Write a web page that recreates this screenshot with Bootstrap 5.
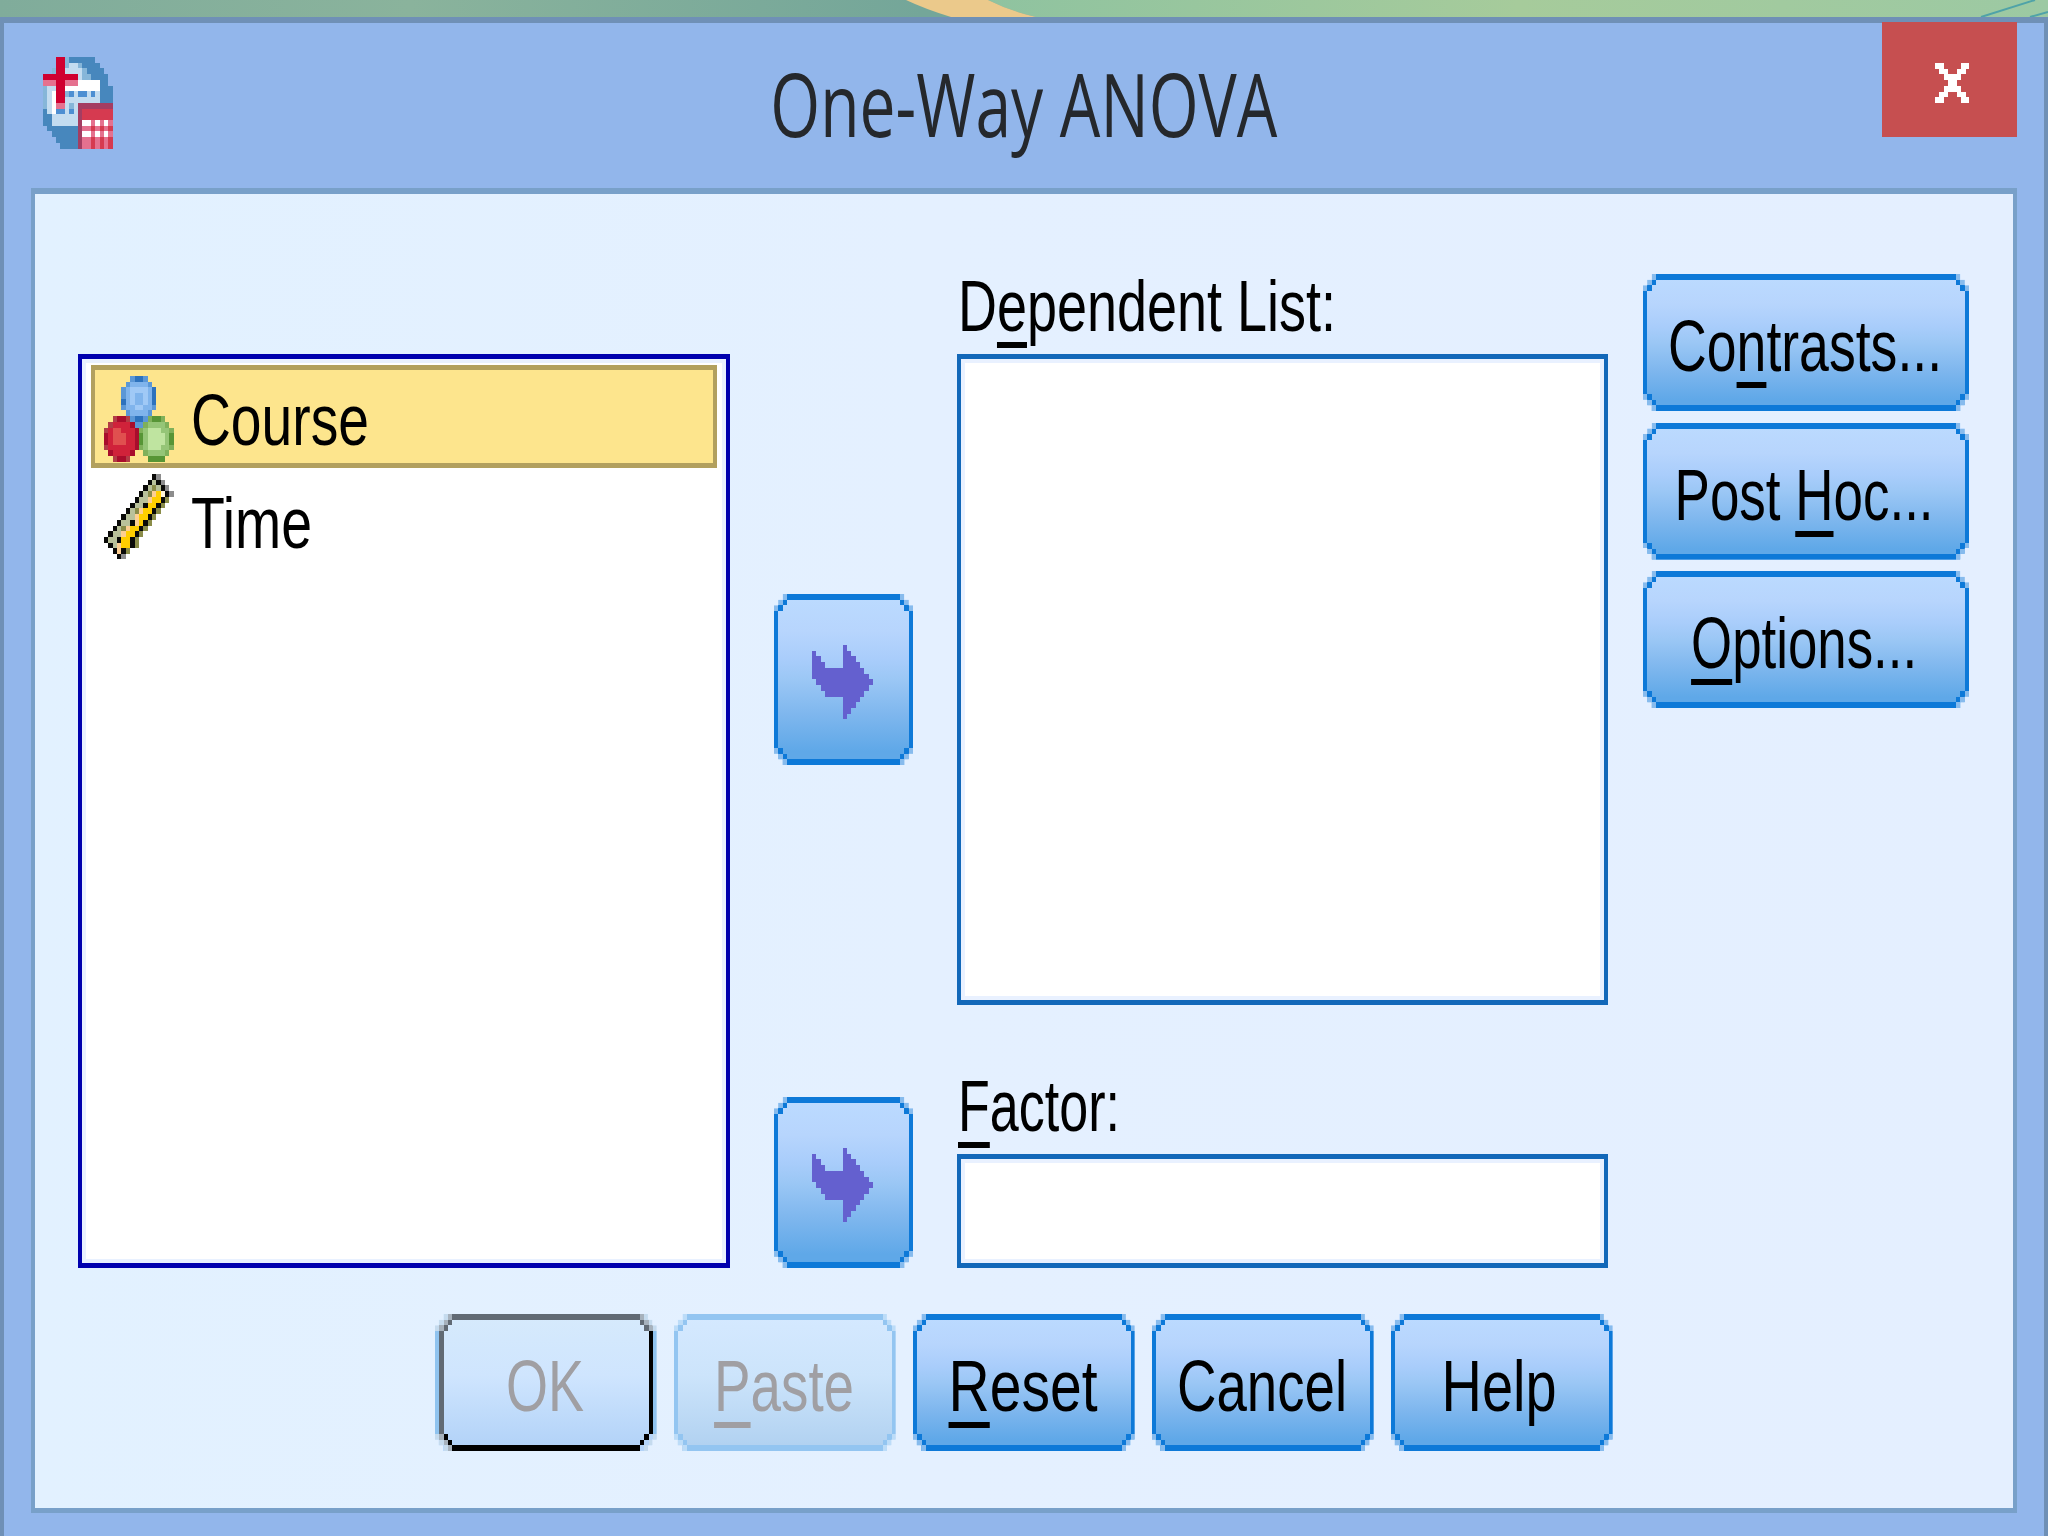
<!DOCTYPE html>
<html lang="en">
<head>
  <meta charset="UTF-8" />
  <meta name="viewport" content="width=device-width, initial-scale=1.0"/>
  <title>One-Way ANOVA</title>
  <link href="https://cdn.jsdelivr.net/npm/bootstrap@5.3.3/dist/css/bootstrap.min.css" rel="stylesheet"/>
  <style>
    body {
      height: 1536px;
      font-family: "Liberation Sans", Arial, sans-serif;
      font-size: 72px;
      line-height: 1;
      color: #000;
      background: #92b6eb;
    }
    .backdrop { height: 17px; flex: none; }
    .backdrop svg { width: 2048px; height: 17px; }

    .dialog-frame { border: solid #6f90b6; border-width: 6px 4px 0; background: #92b6eb; }
    .title-bar {
      display: grid;
      grid-template-columns: 1fr auto 1fr;
      height: 165px;
      flex: none;
    }
    .title-icon { margin: 34px 0 0 39px; }
    .title-text { font-family: "Open Sans", sans-serif; font-size: 88px; line-height: 160px; color: #25282c; }
    .close-btn {
      width: 135px;
      height: 115px;
      margin: -1px 27px 0 0;
      padding: 8px 0 0 5px;
      background: #c64f50;
      border: 0;
      border-radius: 0;
    }

    .dialog-panel {
      margin: 0 27px 23px;
      padding: 80px 43px 0;
      border: solid #78a0c9;
      border-width: 6px 4px 5px;
      background: linear-gradient(90deg, #e2f1ff, #e4f0ff 45%, #e4efff);
    }
    .main-row { height: 994px; }

    .box {
      background: #fff;
      border: solid #1268b9;
      border-width: 5.5px 4.4px;
      box-shadow: inset 0 0 0 4px #e9f1ff;
    }
    .source-box { width: 652px; height: 914px; border-color: #0000ae; padding: 5.5px 9px; }
    .fields { width: 651px; margin-right: 35px; }
    .target-box { height: 651px; }
    .factor-box { height: 114px; }
    .field-label { height: 80px; line-height: 64px; padding-left: 1px; }

    .source-item {
      height: 103px;
      padding: 0 0 0 9px;
      border: solid transparent;
      border-width: 5.5px 4.4px;
      border-radius: 0;
      background: transparent;
      color: #000;
    }
    .source-item.chosen { background: #fde58d; border-color: #b2a05e; }
    .source-item .words { padding-top: 7px; margin-left: 17px; }
    .icon-nominal { margin-top: 6px; }
    .icon-scale { margin-top: -5px; }

    .mover-col { width: 139px; margin: 0 44px; padding-top: 320px; }
    .side-col { width: 326px; gap: 11.5px; }

    /* stepped corners: three cells of 4.4 x 5.7 on each side */
    .cmd {
      position: relative;
      display: flex;
      align-items: center;
      justify-content: center;
      height: 137px;
      padding: 7px 1px 0 0;
      border: 0;
      border-radius: 0;
      font-size: 72px;
      line-height: 1;
      color: #000;
      background: linear-gradient(#bcdbff, #b7d5fd 22%, #a9cdfb 38%, #9bc7f5 50%, #7fb7ee 70%, #5fa8e8 92%);
      border: 0 solid transparent;
      border-image: url("data:image/svg+xml,%3Csvg xmlns='http://www.w3.org/2000/svg' width='70' height='70' viewBox='0 0 7 7' shape-rendering='crispEdges'%3E%3Cpath fill='%2387bbed' d='M2 0h3v1h1v1h1v3h-1v1h-1v1h-3v-1h-1v-1h-1v-3h1v-1h1zM3 1v1h-1v1h-1v1h1v1h1v1h1v-1h1v-1h1v-1h-1v-1h-1v-1z' fill-rule='evenodd'/%3E%3Cpath fill='%230d79d8' d='M3 0h1v1h-1zM3 6h1v1h-1zM0 3h1v1h-1zM6 3h1v1h-1zM2 1h1v1h-1zM1 2h1v1h-1zM4 1h1v1h-1zM5 2h1v1h-1zM2 5h1v1h-1zM1 4h1v1h-1zM4 5h1v1h-1zM5 4h1v1h-1z'/%3E%3C/svg%3E") 30 / 17.2px 13px stretch;
      clip-path: polygon(8.7px 0, calc(100% - 8.7px) 0, calc(100% - 8.7px) 5.7px, calc(100% - 4.3px) 5.7px, calc(100% - 4.3px) 11.4px, 100% 11.4px, 100% calc(100% - 11.4px), calc(100% - 4.3px) calc(100% - 11.4px), calc(100% - 4.3px) calc(100% - 5.7px), calc(100% - 8.7px) calc(100% - 5.7px), calc(100% - 8.7px) 100%, 8.7px 100%, 8.7px calc(100% - 5.7px), 4.3px calc(100% - 5.7px), 4.3px calc(100% - 11.4px), 0 calc(100% - 11.4px), 0 11.4px, 4.3px 11.4px, 4.3px 5.7px, 8.7px 5.7px);
    }
    .cmd-mover { height: 171px; padding-top: 6px; }
    .cmd-wide { padding-right: 3px; }
    .cmd:disabled { color: #a09fa3; background: linear-gradient(#d5e9ff, #cce4fb 45%, #b2d2f1 95%); opacity: 1; }
    .cmd-paste {
      border-image-source: url("data:image/svg+xml,%3Csvg xmlns='http://www.w3.org/2000/svg' width='70' height='70' viewBox='0 0 7 7' shape-rendering='crispEdges'%3E%3Cpath fill='%23bcdcf8' d='M2 0h3v1h1v1h1v3h-1v1h-1v1h-3v-1h-1v-1h-1v-3h1v-1h1zM3 1v1h-1v1h-1v1h1v1h1v1h1v-1h1v-1h1v-1h-1v-1h-1v-1z' fill-rule='evenodd'/%3E%3Cpath fill='%2393c5f1' d='M3 0h1v1h-1zM3 6h1v1h-1zM0 3h1v1h-1zM6 3h1v1h-1zM2 1h1v1h-1zM1 2h1v1h-1zM4 1h1v1h-1zM5 2h1v1h-1zM2 5h1v1h-1zM1 4h1v1h-1zM4 5h1v1h-1zM5 4h1v1h-1z'/%3E%3C/svg%3E");
    }
    .cmd-ok {
      border-image: url("data:image/svg+xml,%3Csvg xmlns='http://www.w3.org/2000/svg' width='90' height='70' viewBox='0 0 9 7' shape-rendering='crispEdges'%3E%3Cpath fill='%23c5dbee' d='M0 2h1v3h-1zM8 2h1v3h-1zM2 0h1v1h-1zM6 0h1v1h-1zM2 6h1v1h-1zM6 6h1v1h-1zM1 1h1v1h-1zM7 1h1v1h-1zM1 5h1v1h-1zM7 5h1v1h-1z'/%3E%3Cpath fill='%238fc3ef' d='M0 3h1v1h-1zM8 3h1v1h-1z'/%3E%3Cpath fill='%23a6b1bc' d='M3 0h1v1h-1zM5 0h1v1h-1zM2 1h1v1h-1zM6 1h1v1h-1zM1 2h1v1h-1zM7 2h1v1h-1zM1 4h1v1h-1zM2 5h1v1h-1zM3 6h1v1h-1z'/%3E%3Cpath fill='%23616a74' d='M4 0h1v1h-1zM3 1h1v1h-1zM5 1h1v1h-1zM2 2h1v1h-1zM6 2h1v1h-1zM1 3h1v1h-1z'/%3E%3Cpath fill='%23000' d='M7 3h1v1h-1zM6 4h1v1h-1zM5 5h1v1h-1zM4 6h1v1h-1zM3 5h1v1h-1zM2 4h1v1h-1z'/%3E%3C/svg%3E") 30 40 / 17.2px 17.4px stretch;
    }
    .cmd-ok:disabled { background: linear-gradient(#d6eafc, #cfe5fe 45%, #b3d3f8 95%); }

    .bottom-row { margin: 46px 0 0 356.5px; gap: 17px; }
    .bottom-row .cmd { width: 222px; }
    .bottom-row .cmd-help { padding-right: 5px; }

    .words { display: inline-block; white-space: pre; flex: none; }
    .key {
      text-decoration: underline;
      text-decoration-thickness: 6px;
      text-underline-offset: 11px;
      text-decoration-skip-ink: none;
    }
    .sprite { display: block; flex: none; }
  </style>
</head>
<body class="d-flex flex-column overflow-hidden m-0">
  <div class="backdrop">
    <svg class="d-block" viewBox="0 0 2048 17">
      <defs>
        <linearGradient id="leaf">
          <stop offset="0" stop-color="#80ac9b"/>
          <stop offset=".2" stop-color="#8ab39c"/>
          <stop offset=".45" stop-color="#74a699"/>
        </linearGradient>
        <linearGradient id="meadow">
          <stop offset="0" stop-color="#8fc3a0"/>
          <stop offset=".5" stop-color="#a6cb9b"/>
          <stop offset="1" stop-color="#9cc9a3"/>
        </linearGradient>
      </defs>
      <rect width="2048" height="17" fill="url(#leaf)"/>
      <path d="M988 0H2048V17H1036Q1010 11 988 0z" fill="url(#meadow)"/>
      <path d="M906 0H988Q1010 11 1036 17H951Q925 9 906 0z" fill="#ebc98b"/>
      <path d="M1981 17L2035 0M2030 17L2048 12" stroke="#4fa3a8" stroke-width="2" fill="none"/>
    </svg>
  </div>

  <div class="dialog-frame d-flex flex-column flex-fill">
    <div class="title-bar">
      <svg class="sprite title-icon" data-sprite="app"></svg>
      <span class="words title-text" data-width="507">One-Way ANOVA</span>
      <button class="btn close-btn d-flex align-items-center justify-content-center ms-auto" aria-label="Close">
        <svg class="sprite" data-sprite="close"></svg>
      </button>
    </div>

    <div class="dialog-panel flex-fill">
      <div class="main-row d-flex">
        <div class="box source-box align-self-end">
          <div class="source-item chosen d-flex align-items-center">
            <svg class="sprite icon-nominal" data-sprite="nominal"></svg>
            <span class="words" data-width="178">Course</span>
          </div>
          <div class="source-item d-flex align-items-center">
            <svg class="sprite icon-scale" data-sprite="scale"></svg>
            <span class="words" data-width="121">Time</span>
          </div>
        </div>

        <div class="mover-col d-flex flex-column justify-content-between">
          <button class="cmd cmd-mover"><svg class="sprite" data-sprite="arrow"></svg></button>
          <button class="cmd cmd-mover"><svg class="sprite" data-sprite="arrow"></svg></button>
        </div>

        <div class="fields d-flex flex-column">
          <div class="field-label"><span class="words" data-width="378">D<span class="key">e</span>pendent List:</span></div>
          <div class="box target-box"></div>
          <div class="field-label mt-auto"><span class="words" data-width="162"><span class="key">F</span>actor:</span></div>
          <div class="box factor-box"></div>
        </div>

        <div class="side-col d-flex flex-column">
          <button class="cmd"><span class="words" data-width="274">Co<span class="key">n</span>trasts...</span></button>
          <button class="cmd cmd-wide"><span class="words" data-width="259">Post <span class="key">H</span>oc...</span></button>
          <button class="cmd cmd-wide"><span class="words" data-width="226"><span class="key">O</span>ptions...</span></button>
        </div>
      </div>

      <div class="bottom-row d-flex">
        <button class="cmd cmd-ok" disabled><span class="words" data-width="78">OK</span></button>
        <button class="cmd cmd-paste" disabled><span class="words" data-width="140"><span class="key">P</span>aste</span></button>
        <button class="cmd"><span class="words" data-width="149"><span class="key">R</span>eset</span></button>
        <button class="cmd"><span class="words" data-width="170">Cancel</span></button>
        <button class="cmd cmd-help"><span class="words" data-width="115">Help</span></button>
      </div>
    </div>
  </div>

  <script src="https://cdn.jsdelivr.net/npm/bootstrap@5.3.3/dist/js/bootstrap.bundle.min.js"></script>
  <script>
    const CELL_W = 4.36;
    const CELL_H = 5.73;

    // one letter per cell, a dot is transparent
    const sprites = {
      app: {
        colors: { b: "#4787bd", l: "#86b6d9", L: "#c3dcf0", w: "#ffffff", R: "#d00030", P: "#e5718f", B: "#4d8fd2", m: "#a43d62", r: "#d63a50" },
        rows: [
          "...RRlbbbbbb....",
          "...RRlLLlbbbb...",
          "..lRRLLLLlbbbb..",
          "RRRRRRRRLllbbbb.",
          "PPPRRPPPwwwwwbb.",
          "lLLRRwwwwwwwwbbb",
          "lLwRRlBLBBLBLbbb",
          "lLwRRLLLLLLLLbbb",
          "lLwPPLlLmmmmmmmm",
          "bLwBBLBLmrrrrrrr",
          "bbLLLLLLmrrrrrrr",
          "bbLLLLLLmwwPwPwP",
          ".bbbbbbbmPPrPrPr",
          "..bbbbbbmwwPwPwP",
          "...bbbbbmPPrPrPr",
          "....bbbbmPPrPrPr"
        ]
      },
      close: {
        colors: { x: "#ffffff" },
        rows: ["xx....xx", ".xx..xx.", "..xxxx..", "...xx...", "..xxxx..", ".xx..xx.", "xx....xx"]
      },
      nominal: {
        colors: {
          A: "#2d72bd", a: "#5b97d6", B: "#80b4ec", C: "#a0c9f6",
          D: "#a80d2c", d: "#b23d46", E: "#d0223a", F: "#e0504f",
          G: "#579536", g: "#7fb05a", H: "#95c577", I: "#bfe4a0"
        },
        rows: [
          "......aAAa......",
          ".....aBBBBa.....",
          "....aBCCCCBA....",
          "....aBCBBCBA....",
          "....ABCBBCBA....",
          "....aBBCCBBa....",
          ".....aBBBBa.....",
          "..dDDdaAAagGGg..",
          ".dEEEEDaagHHHHg.",
          "dEFFEEEDgHIIIHHg",
          "DEFFFEEDGHIIIIHG",
          "DEFFFEEDGHIIIIHG",
          "dEEEEEEDgHIIIHHg",
          ".DEEEED..gHHHHg.",
          "..dDDd....GGGG.."
        ]
      },
      scale: {
        colors: { k: "#0a0a08", g: "#8d8d8d", s: "#b9c19a", o: "#8a8c48", y: "#ffce00", p: "#fdcf93", w: "#fff6d8" },
        rows: [
          "...........kg...",
          "..........kskg..",
          ".........ksoskg.",
          "........ksopywkg",
          ".......ksspyyko.",
          "......ksskyyko..",
          ".....ksopyyko...",
          "....ksspyyko....",
          "...ksskpyko.....",
          "..ksopyyko......",
          ".ksspyyko.......",
          "ksskyyko........",
          ".kspyyko........",
          "..kpko..........",
          "...kg..........."
        ]
      },
      arrow: {
        colors: { v: "#6460cf" },
        rows: [
          ".......v......",
          "v......vv.....",
          "vv.....vvv....",
          "vvv....vvvv...",
          "vvvvvvvvvvvv..",
          "vvvvvvvvvvvvv.",
          ".vvvvvvvvvvvvv",
          "..vvvvvvvvvvv.",
          "...vvvvvvvvv..",
          ".......vvvv...",
          ".......vvv....",
          ".......vv.....",
          ".......v......"
        ]
      }
    };

    function drawSprite(svg) {
      const { colors, rows } = sprites[svg.dataset.sprite];
      const cols = rows[0].length;
      svg.setAttribute("viewBox", `0 0 ${cols} ${rows.length}`);
      svg.setAttribute("width", cols * CELL_W);
      svg.setAttribute("height", rows.length * CELL_H);
      svg.setAttribute("preserveAspectRatio", "none");
      svg.setAttribute("shape-rendering", "crispEdges");
      let cells = "";
      rows.forEach((row, y) => {
        [...row].forEach((c, x) => {
          if (c !== ".") cells += `<rect x="${x}" y="${y}" width="1" height="1" fill="${colors[c]}"/>`;
        });
      });
      svg.innerHTML = cells;
    }

    // narrow letters: squeeze each label to its own width
    function fitWords(el) {
      const scale = el.dataset.width / el.getBoundingClientRect().width;
      const inRow = el.closest(".source-item, .field-label");
      el.style.transformOrigin = inRow ? "left" : "center";
      el.style.transform = `scaleX(${scale})`;
    }

    document.querySelectorAll("[data-sprite]").forEach(drawSprite);
    document.querySelectorAll("[data-width]").forEach(fitWords);
  </script>
</body>
</html>
